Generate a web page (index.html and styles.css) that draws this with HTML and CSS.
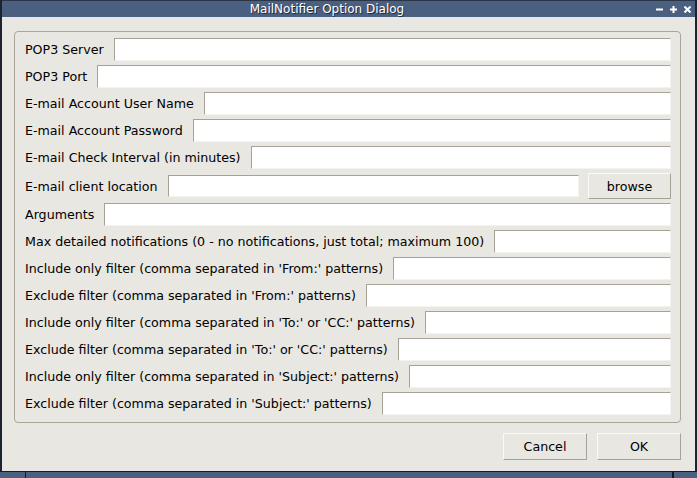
FILE: index.html
```html
<!DOCTYPE html>
<html lang="en">
  <head>
    <meta charset="UTF-8" />
    <title>MailNotifier Option Dialog</title>
    <link rel="stylesheet" href="styles.css">
  </head>
  <body>
    <div class="window">
      <div class="titlebar">
        <div class="title">MailNotifier Option Dialog</div>
        <div class="title-buttons">
          <svg width="7" height="7" viewBox="0 0 7 7"><rect x="0" y="2.5" width="7" height="2" fill="#fff"/></svg>
          <svg width="7" height="7" viewBox="0 0 7 7"><rect x="0" y="2.5" width="7" height="2" fill="#fff"/><rect x="2.5" y="0" width="2" height="7" fill="#fff"/></svg>
          <svg width="7" height="7" viewBox="0 0 7 7"><path d="M0.5 0.5 L6.5 6.5 M6.5 0.5 L0.5 6.5" stroke="#fff" stroke-width="2"/></svg>
        </div>
      </div>

      <div class="content">
        <div class="group">
          <div class="row"><label>POP3 Server</label><input type="text"></div>
          <div class="row"><label>POP3 Port</label><input type="text"></div>
          <div class="row"><label>E-mail Account User Name</label><input type="text"></div>
          <div class="row"><label>E-mail Account Password</label><input type="password"></div>
          <div class="row"><label>E-mail Check Interval (in minutes)</label><input type="text"></div>
          <div class="row tall">
            <label>E-mail client location</label><input type="text">
            <button class="btn browse">browse</button>
          </div>
          <div class="row"><label>Arguments</label><input type="text"></div>
          <div class="row"><label>Max detailed notifications (0 - no notifications, just total; maximum 100)</label><input type="text"></div>
          <div class="row"><label>Include only filter (comma separated in 'From:' patterns)</label><input type="text"></div>
          <div class="row"><label>Exclude filter (comma separated in 'From:' patterns)</label><input type="text"></div>
          <div class="row"><label>Include only filter (comma separated in 'To:' or 'CC:' patterns)</label><input type="text"></div>
          <div class="row"><label>Exclude filter (comma separated in 'To:' or 'CC:' patterns)</label><input type="text"></div>
          <div class="row"><label>Include only filter (comma separated in 'Subject:' patterns)</label><input type="text"></div>
          <div class="row"><label>Exclude filter (comma separated in 'Subject:' patterns)</label><input type="text"></div>
        </div>

        <div class="actions">
          <button class="btn">Cancel</button>
          <button class="btn">OK</button>
        </div>
      </div>
    </div>

    <div class="taskbar">
      <div class="task first"></div>
      <div class="task wide"></div>
      <div class="task"></div>
    </div>
  </body>
</html>
```

FILE: styles.css
```css
body {
  margin: 0;
  width: 697px;
  height: 478px;
  overflow: hidden;
  background: #e8e7e2;
  font-family: "DejaVu Sans", sans-serif;
  color: #000;
}

.window {
  height: 471px;
  box-sizing: border-box;
  border-left: 2px solid #1d2430;
  border-right: 2px solid #1d2430;
  display: flex;
  flex-direction: column;
}

.titlebar {
  height: 17px;
  box-sizing: border-box;
  border-top: 1px solid #2a3548;
  background: #4b5f80;
  display: flex;
  align-items: center;
}

.title {
  flex: 1;
  text-align: center;
  color: #fff;
  font-size: 12px;
  text-shadow: 1px 1px 0 #1f2a3c;
  padding-right: 4px;
}

.title-buttons {
  display: flex;
  gap: 7px;
  padding-right: 4px;
}

.title-buttons svg {
  display: block;
}

.content {
  flex: 1;
  padding: 14px 14px 0 12px;
}

.group {
  border: 1px solid #a9a697;
  border-radius: 4px;
  padding: 6px 9px 7px 10px;
  display: flex;
  flex-direction: column;
  gap: 4px;
}

.row {
  display: flex;
  align-items: center;
  gap: 10px;
  height: 23px;
}

.row.tall {
  height: 26px;
}

label {
  font-size: 12.65px;
  white-space: nowrap;
}

input {
  flex: 1;
  min-width: 0;
  height: 23px;
  box-sizing: border-box;
  margin: 0;
  border: 1px solid #f4f3f0;
  border-top-color: #a6a396;
  border-left-color: #a6a396;
  background: #fff;
}

.row.tall input {
  height: 22px;
}

.btn {
  width: 84px;
  height: 27px;
  box-sizing: border-box;
  background: #e8e7e2;
  border: 1px solid #a6a396;
  border-top-color: #fafaf8;
  border-left-color: #fafaf8;
  font-family: "DejaVu Sans", sans-serif;
  font-size: 12.65px;
  color: #000;
  padding: 0;
}

.btn.browse {
  width: 83px;
  height: 26px;
  margin-left: -1px;
}

.actions {
  display: flex;
  justify-content: flex-end;
  gap: 10px;
  margin-top: 10px;
}

.taskbar {
  height: 7px;
  border-top: 1px solid #151b26;
  background: #4b5f80;
  display: flex;
}

.task {
  border-right: 1px solid #151b26;
}

.task.first {
  width: 25px;
}

.task.wide {
  width: 646px;
}
```
